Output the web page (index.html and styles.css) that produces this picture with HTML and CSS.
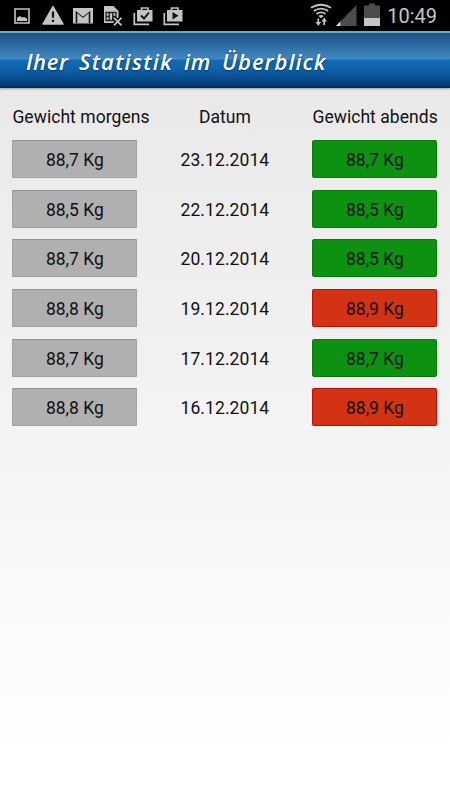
FILE: index.html
```html
<!DOCTYPE html>
<html lang="de">
<head>
<meta charset="utf-8">
<title>Statistik</title>
<link rel="stylesheet" href="styles.css">
</head>
<body>
<div class="status">
  <div class="icons">
    <svg width="20" height="24" viewBox="0 0 20 24"><path d="M3 9h14v14H3z" fill="none" stroke="#c4c4c4" stroke-width="1.6"/><path d="M5 21v-3l3-2 2 1.5 2-.5 3 1.5V21z" fill="#c4c4c4"/></svg>
    <svg width="24" height="24" viewBox="0 0 24 24"><path d="M12 6.5 22 24H2z" fill="#c4c4c4" stroke="#c4c4c4" stroke-width="1.5" stroke-linejoin="round"/><path d="M12 11.5v6.2M12 19.7v2.3" stroke="#111" stroke-width="2.2"/></svg>
    <svg width="22" height="24" viewBox="0 0 22 24"><path d="M1 8h20v15.500H1z" fill="#c4c4c4"/><path d="M4.500 23V11.500L11 17l6.500-5.500V23" fill="none" stroke="#151515" stroke-width="1.600"/><path d="m3 9 8 6.500L19 9" fill="none" stroke="#c4c4c4" stroke-width="2"/></svg>
    <svg width="22" height="24" viewBox="0 0 22 24"><path d="M2 6h9.500l5 5v12H2z" fill="#c4c4c4"/><path d="M4 12.500h10v8H4zM7.300 12.500v8M10.700 12.500v8M4 16.500h3.300m3.400 0H14" fill="none" stroke="#222" stroke-width="1.300"/><path d="m11.500 17.500 8 8m0-8-8 8" stroke="#000" stroke-width="4"/><path d="m12 17.800 7.500 7.500m0-7.500-7.500 7.500" stroke="#c4c4c4" stroke-width="1.800"/></svg>
    <svg width="22" height="24" viewBox="0 0 22 24"><path d="M5 10h15.500v11.500H5z" fill="#c4c4c4"/><path d="M9.500 10V8h6.500v2M2.300 13v11.300H17" fill="none" stroke="#c4c4c4" stroke-width="1.700"/><path d="m9 15.500 3 3 5-6" fill="none" stroke="#111" stroke-width="1.900"/></svg>
    <svg width="22" height="24" viewBox="0 0 22 24"><path d="M5 10h15.500v11.500H5z" fill="#c4c4c4"/><path d="M9.500 10V8h6.500v2M2.300 13v11.300H17" fill="none" stroke="#c4c4c4" stroke-width="1.700"/><path d="m10.500 12 6 3.800-6 3.800z" fill="#111"/></svg>
  </div>
  <div class="system">
    <svg width="22" height="26" viewBox="0 0 22 26"><g fill="none" stroke="#c4c4c4" stroke-width="1.900"><path d="M1 7.800q10-6 20 0M3.800 11q7.200-4.800 14.400 0M6.500 14q4.500-3.200 9 0"/></g><path d="M8.300 16q2.700-2 5.400 0L11 18.300z" fill="#c4c4c4"/><path d="M8.300 18.500v5M14.200 25v-5" stroke="#c4c4c4" stroke-width="1.700"/><path d="m5.500 22 2.800 4 2.800-4zM11.400 21.500l2.800-4 2.800 4z" fill="#c4c4c4"/></svg>
    <svg width="21" height="26" viewBox="0 0 21 26"><path d="M20.500 5v21H0z" fill="#4c4c4c"/><path d="M4.300 21.500V26H0z" fill="#ddd"/></svg>
    <svg width="16" height="26" viewBox="0 0 16 26"><path d="M5 3.500h6v2h5V18H0V5.500h5z" fill="#4c4c4c"/><path d="M0 18h16v8H0z" fill="#c4c4c4"/></svg>
    <span class="clock">10:49</span>
  </div>
</div>
<header class="bar"><h1><span class="w1">Iher</span> <span class="w2">Statistik</span> <span class="w3">im</span> <span class="w4">Überblick</span></h1></header>
<main class="grid">
  <div class="head">Gewicht morgens</div><div class="head mid">Datum</div><div class="head">Gewicht abends</div>
  <div class="cell gray">88,7 Kg</div><div class="date">23.12.2014</div><div class="cell green">88,7 Kg</div>
  <div class="cell gray">88,5 Kg</div><div class="date">22.12.2014</div><div class="cell green">88,5 Kg</div>
  <div class="cell gray">88,7 Kg</div><div class="date">20.12.2014</div><div class="cell green">88,5 Kg</div>
  <div class="cell gray">88,8 Kg</div><div class="date">19.12.2014</div><div class="cell red">88,9 Kg</div>
  <div class="cell gray">88,7 Kg</div><div class="date">17.12.2014</div><div class="cell green">88,7 Kg</div>
  <div class="cell gray">88,8 Kg</div><div class="date">16.12.2014</div><div class="cell red">88,9 Kg</div>
</main>
</body>
</html>
```
FILE: styles.css
```css
* { box-sizing: border-box; }
html { height: 100%; }
body {
  margin: 0;
  height: 800px;
  overflow: hidden;
  font-family: Roboto, sans-serif;
  color: #111;
  background: linear-gradient(#e9e9e9 88px, #f3f3f3 420px, #fff 760px);
}
.status {
  height: 31px;
  background: #000;
  display: flex;
  justify-content: space-between;
  padding: 0 13px 0 12px;
}
.icons { display: flex; gap: 8px; }
.icons svg { overflow: visible; }
.icons svg:first-child { margin-right: 1px; }
.icons svg:nth-child(2) { margin-right: -1px; }
.system { display: flex; }
.system svg { margin-right: 5px; }
.system svg:first-child { margin-right: 4px; }
.system svg:nth-child(3) { margin: 0 7px 0 2px; }
.clock {
  font-size: 20px;
  line-height: 32px;
  color: #c4c4c4;
}
.bar {
  height: 57px;
  border-top: 2px solid #69aad0;
  border-bottom: 2px solid #082b50;
  background: linear-gradient(#1d5286, #3f86c0 47%, #448bc4 49%, #116cb6 51%, #0e61a9 70%, #043c74);
  padding-left: 26px;
  box-shadow: 0 1px 2px rgba(0, 0, 0, .35);
}
h1 {
  margin: 0;
  display: flex;
  font: italic 600 22px/57px "Open Sans", sans-serif;
  color: #fff;
  white-space: nowrap;
  text-shadow: 0 1px 2px #0b3360;
}
.w1 { width: 53px; letter-spacing: .6px; }
.w2 { width: 105px; letter-spacing: 1.300px; }
.w3 { width: 38px; letter-spacing: .8px; }
.w4 { letter-spacing: 1px; }
.grid {
  display: grid;
  grid-template-columns: 125px 1fr 125px;
  grid-template-rows: 34px repeat(6, 38px);
  row-gap: 11.600px;
  padding: 6.600px 12.600px 0 12.400px;
  font-size: 17.500px;
  white-space: nowrap;
}
.head {
  line-height: 45px;
  letter-spacing: .05px;
}
.mid, .date, .cell { text-align: center; }
.date { line-height: 40px; letter-spacing: .08px; }
.cell {
  border: 1px solid;
  border-radius: 2px;
  line-height: 38px;
}
.gray {
  background: #b0b0b0;
  border-color: #929292 #a2a2a2 #9e9e9e;
  border-radius: 1px;
}
.green { background: #0c9110; border-color: #087b0b; }
.red { background: #d33313; border-color: #ad1909 #c00b08 #b90b07; }
```
